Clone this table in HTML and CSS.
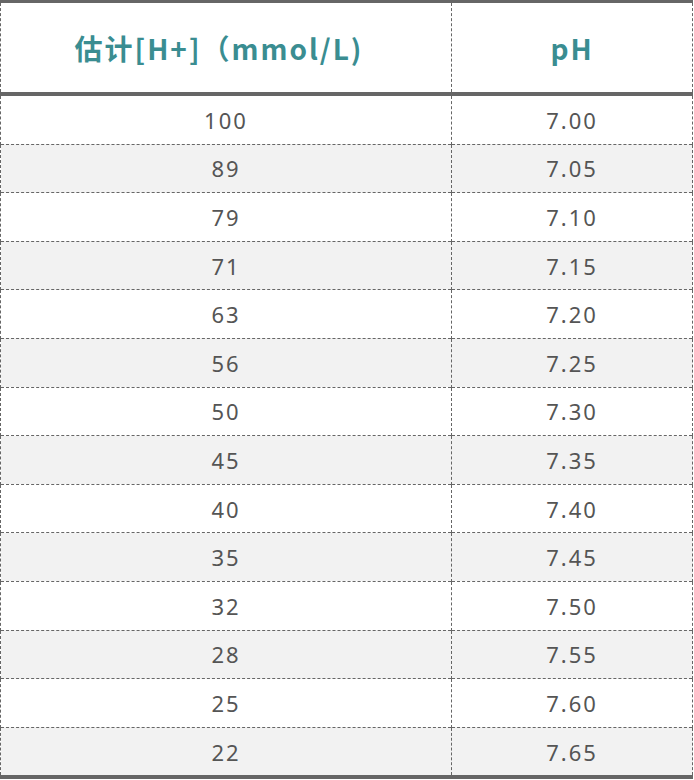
FILE: index.html
```html
<!DOCTYPE html>
<html lang="zh">
<head>
<meta charset="utf-8">
<link rel="stylesheet" href="styles.css">
</head>
<body>
<table class="ph-table">
  <thead>
    <tr>
      <th class="col-a">估计[H+]（mmol/L)</th>
      <th class="col-b">pH</th>
    </tr>
  </thead>
  <tbody>
    <tr><td>100</td><td>7.00</td></tr>
    <tr><td>89</td><td>7.05</td></tr>
    <tr><td>79</td><td>7.10</td></tr>
    <tr><td>71</td><td>7.15</td></tr>
    <tr><td>63</td><td>7.20</td></tr>
    <tr><td>56</td><td>7.25</td></tr>
    <tr><td>50</td><td>7.30</td></tr>
    <tr><td>45</td><td>7.35</td></tr>
    <tr><td>40</td><td>7.40</td></tr>
    <tr><td>35</td><td>7.45</td></tr>
    <tr><td>32</td><td>7.50</td></tr>
    <tr><td>28</td><td>7.55</td></tr>
    <tr><td>25</td><td>7.60</td></tr>
    <tr><td>22</td><td>7.65</td></tr>
  </tbody>
</table>
</body>
</html>
```

FILE: styles.css
```css
html, body {
  margin: 0;
  padding: 0;
  background: #ffffff;
}

.ph-table {
  width: 693px;
  border-collapse: collapse;
  table-layout: fixed;
  border-top: 3px solid #666666;
  border-bottom: 4px solid #666666;
  font-family: "Noto Sans", "Noto Sans CJK SC", sans-serif;
}

.ph-table th,
.ph-table td {
  border-left: 1px dashed #666666;
  border-right: 1px dashed #666666;
  padding: 0;
  text-align: center;
}

.ph-table th {
  height: 89px;
  font-family: "Noto Sans CJK SC", "Noto Sans", sans-serif;
  font-weight: bold;
  font-size: 28px;
  letter-spacing: 2px;
  color: #3a8d91;
  border-bottom: 4px solid #666666;
}

.ph-table .col-a {
  width: 436px;
  padding-right: 14px;
}

.ph-table td {
  height: 47.6px;
  font-size: 22px;
  letter-spacing: 2px;
  color: #555555;
  border-top: 1px dashed #666666;
}

.ph-table tbody tr:first-child td {
  border-top: none;
}

.ph-table tbody tr:nth-child(even) td {
  background: #f2f2f2;
}
```
